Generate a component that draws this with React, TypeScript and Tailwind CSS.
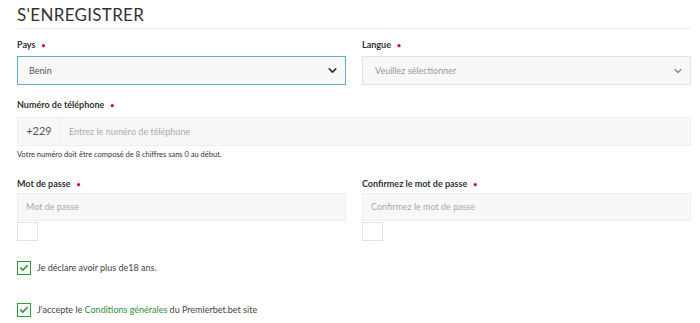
import { ChevronDown, Check } from 'lucide-react';

function Label({ children }: { children: React.ReactNode }) {
    return (
        <div className="flex items-center gap-[6px] h-[14px] text-[9px] font-bold text-[#333]">
            <span>{children}</span>
            <span className="text-[#d0021b] text-[7px] leading-none">•</span>
        </div>
    );
}

export default function App() {
    return (
        <div className="w-[700px] h-[323px] bg-white px-[17px] pt-[4px] text-[#444]" style={{ fontFamily: 'Lato, sans-serif' }}>
            <h1 className="text-[17px] leading-[22px] text-[#333] tracking-[0.3px]">S'ENREGISTRER</h1>
            <div className="mt-[2px] h-px bg-[#eee] w-[674px]" />

            <div className="grid grid-cols-2 gap-x-[16px] w-[674px] mt-[9px]">
                <div>
                    <Label>Pays</Label>
                    <div className="mt-[4px] h-[29px] border border-[#5bb2c2] bg-[#f8f8f8] flex items-center justify-between pl-[11px] pr-[6px]">
                        <span className="text-[9px] text-[#555]">Benin</span>
                        <ChevronDown size={13} strokeWidth={3} className="text-[#333]" />
                    </div>
                </div>
                <div>
                    <Label>Langue</Label>
                    <div className="mt-[4px] h-[29px] border border-[#e3e3e3] bg-[#f8f8f8] flex items-center justify-between pl-[12px] pr-[6px]">
                        <span className="text-[9px] text-[#999]">Veuillez sélectionner</span>
                        <ChevronDown size={12} strokeWidth={2.5} className="text-[#888]" />
                    </div>
                </div>
            </div>

            <div className="mt-[13px] w-[674px]">
                <Label>Numéro de téléphone</Label>
                <div className="mt-[5px] h-[29px] border border-[#eee] bg-[#f8f8f8] flex items-center">
                    <div className="w-[43px] h-full flex items-center justify-center border-r border-[#eee] text-[11px] text-[#555]">+229</div>
                    <span className="pl-[8px] text-[9px] text-[#aaa]">Entrez le numéro de téléphone</span>
                </div>
                <p className="mt-[4px] text-[7.5px] leading-[10px] text-[#333]">Votre numéro doit être composé de 8 chiffres sans 0 au début.</p>
            </div>

            <div className="grid grid-cols-2 gap-x-[16px] w-[674px] mt-[17px]">
                <div>
                    <Label>Mot de passe</Label>
                    <div className="mt-[2px] h-[28px] border border-[#eee] bg-[#f8f8f8] flex items-center pl-[8px]">
                        <span className="text-[9px] text-[#aaa]">Mot de passe</span>
                    </div>
                    <div className="mt-px w-[21px] h-[19px] border border-[#e3e3e3] bg-white" />
                </div>
                <div>
                    <Label>Confirmez le mot de passe</Label>
                    <div className="mt-[2px] h-[28px] border border-[#eee] bg-[#f8f8f8] flex items-center pl-[8px]">
                        <span className="text-[9px] text-[#aaa]">Confirmez le mot de passe</span>
                    </div>
                    <div className="mt-px w-[21px] h-[19px] border border-[#e3e3e3] bg-white" />
                </div>
            </div>

            <div className="mt-[20px] flex items-center gap-[6px]">
                <div className="w-[14px] h-[14px] border border-[#2f9a3a] flex items-center justify-center">
                    <Check size={10} strokeWidth={4} className="text-[#2f9a3a]" />
                </div>
                <span className="text-[9px] text-[#444]">Je déclare avoir plus de18 ans.</span>
            </div>

            <div className="mt-[28px] flex items-center gap-[6px]">
                <div className="w-[14px] h-[14px] border border-[#2f9a3a] flex items-center justify-center">
                    <Check size={10} strokeWidth={4} className="text-[#2f9a3a]" />
                </div>
                <span className="text-[9px] text-[#444]">
                    J'accepte le <span className="text-[#2f8f3a]">Conditions générales</span> du Premierbet.bet site
                </span>
            </div>
        </div>
    );
}
